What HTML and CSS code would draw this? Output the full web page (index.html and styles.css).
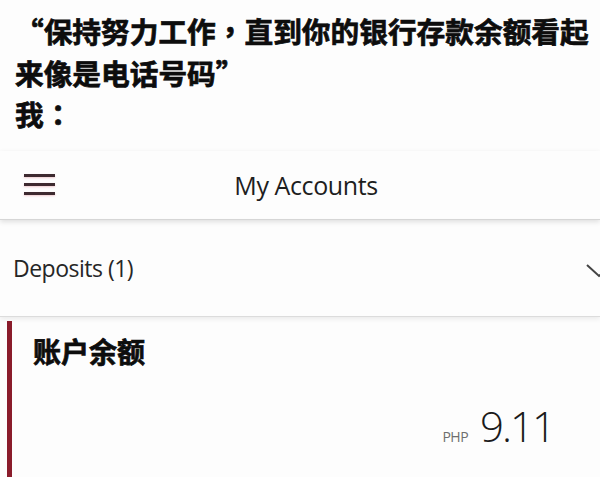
FILE: index.html
```html
<!DOCTYPE html>
<html lang="zh-CN">
<head>
    <meta charset="UTF-8">
    <meta name="viewport" content="width=device-width, initial-scale=1.0">
    <title>My Accounts</title>
    <link rel="stylesheet" href="styles.css">
</head>
<body>
    <div class="caption">
        “保持努力工作<span class="punct" lang="zh-TW">，</span>直到你的银行存款余额看起<br>来像是电话号码”<br>我<span class="punct" lang="zh-TW">：</span>
    </div>

    <div class="app">
        <header class="app-header">
            <div class="menu">
                <span></span>
                <span></span>
                <span></span>
            </div>
            <h1 class="title">My Accounts</h1>
            <div></div>
        </header>

        <div class="section-row">
            <span class="section-name">Deposits (1)</span>
            <svg class="chevron" width="26" height="14" viewBox="0 0 26 14">
                <polyline points="1,1 13,12 25,1" fill="none" stroke="#444" stroke-width="2"/>
            </svg>
        </div>

        <div class="card">
            <div class="card-title">账户余额</div>
            <div class="balance">
                <span class="currency">PHP</span>
                <span class="amount">9.11</span>
            </div>
        </div>
    </div>
</body>
</html>
```

FILE: styles.css
```css
html, body {
    margin: 0;
    background: #fdfdfd;
    overflow: hidden;
}
body {
    width: 600px;
    height: 477px;
    font-family: "Noto Sans CJK SC", "Noto Sans", sans-serif;
}
.caption {
    padding: 10px 0 0 15px;
    font-size: 28.7px;
    line-height: 41.5px;
    font-weight: 700;
    -webkit-text-stroke: 0.7px #0d0d0d;
    color: #0d0d0d;
    white-space: nowrap;
}
.punct {
    font-family: "Noto Sans CJK TC", "Noto Sans CJK SC", sans-serif;
}
.app {
    margin-top: 16px;
    font-family: "Open Sans", "Noto Sans", sans-serif;
}
.app-header {
    display: grid;
    grid-template-columns: 1fr auto 1fr;
    align-items: center;
    height: 68px;
    border-bottom: 1px solid #d6d6d6;
    box-shadow: 0 2px 5px rgba(0, 0, 0, 0.12);
    position: relative;
}
.menu {
    display: flex;
    flex-direction: column;
    gap: 6px;
    padding-left: 24px;
}
.menu span {
    display: block;
    width: 31px;
    height: 3px;
    background: #3d2a30;
    box-shadow: 0 1px 2px rgba(200, 60, 80, 0.25);
}
.title {
    margin: 0;
    padding-left: 12px;
    font-size: 25px;
    font-weight: 400;
    letter-spacing: -0.4px;
    color: #1e1e1e;
}
.section-row {
    display: flex;
    justify-content: space-between;
    align-items: center;
    height: 96px;
    padding-left: 13px;
    border-bottom: 1px solid #dcdcdc;
    box-shadow: 0 2px 5px rgba(0, 0, 0, 0.08);
}
.section-name {
    font-size: 23px;
    letter-spacing: -0.5px;
    color: #262626;
}
.chevron {
    margin-right: -12px;
    margin-top: 6px;
}
.card {
    margin-top: 4px;
    margin-left: 7px;
    border-left: 5px solid #8a1c2b;
    height: 160px;
    padding: 10px 46px 0 21px;
}
.card-title {
    font-family: "Noto Sans CJK SC", sans-serif;
    font-size: 28px;
    font-weight: 700;
    -webkit-text-stroke: 0.7px #0d0d0d;
    color: #0d0d0d;
    line-height: 40px;
}
.balance {
    display: flex;
    justify-content: flex-end;
    align-items: baseline;
    gap: 12px;
    margin-top: 26px;
}
.currency {
    font-size: 14px;
    letter-spacing: -0.5px;
    color: #6e6e6e;
}
.amount {
    font-size: 42px;
    font-weight: 300;
    color: #1a1a1a;
    letter-spacing: -2px;
}
```
